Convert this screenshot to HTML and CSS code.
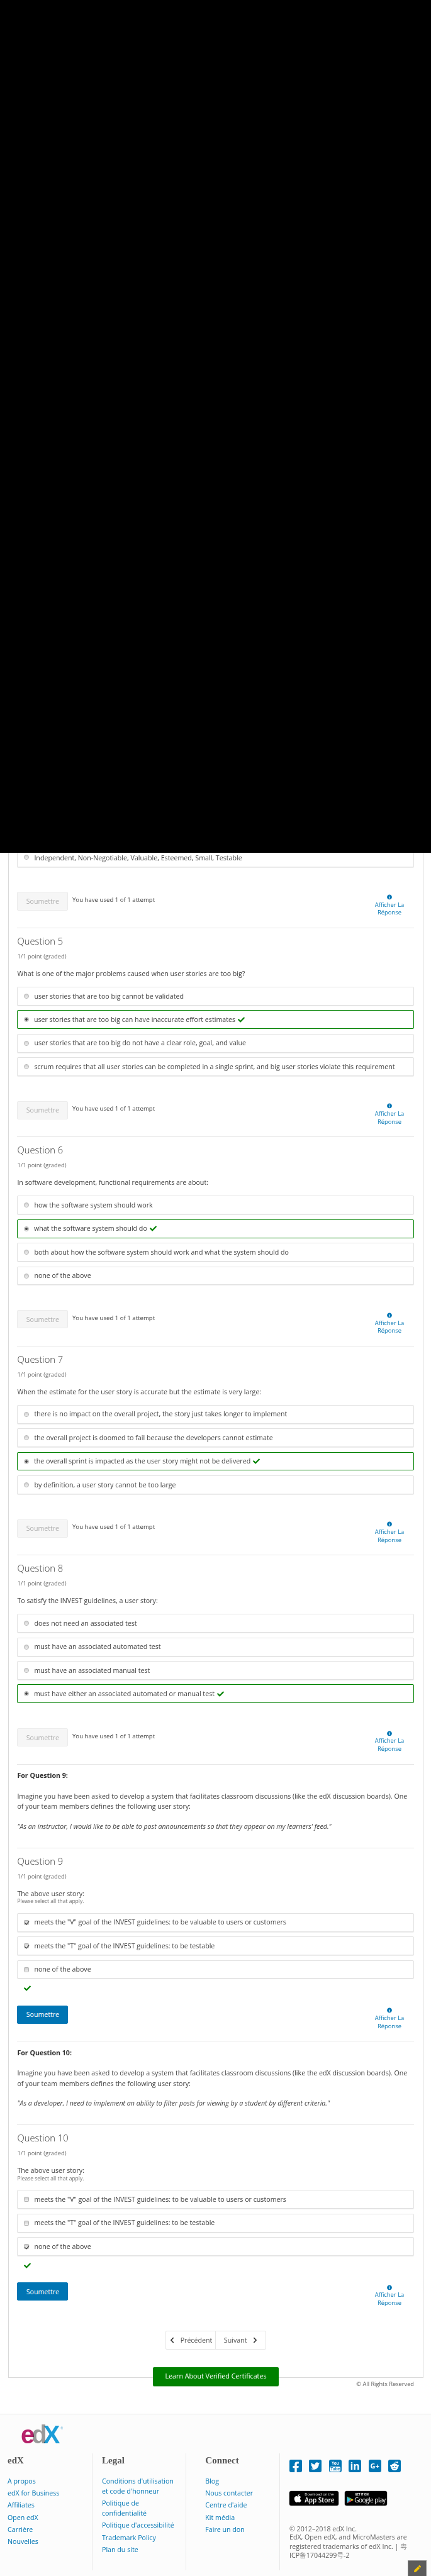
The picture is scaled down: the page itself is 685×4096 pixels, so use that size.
FILE: index.html
```html
<!DOCTYPE html>
<html lang="fr">
<head>
<meta charset="utf-8">
<title>Problem set</title>
<link rel="stylesheet" href="styles.css">
</head>
<body>
<svg class="defs" width="0" height="0" aria-hidden="true">
  <symbol id="i-check" viewBox="0 0 512 512"><path d="M173.898 439.404l-166.4-166.4c-9.997-9.997-9.997-26.206 0-36.204l36.203-36.204c9.997-9.998 26.207-9.998 36.204 0L192 312.69 432.095 72.596c9.997-9.997 26.207-9.997 36.204 0l36.203 36.204c9.997 9.997 9.997 26.206 0 36.204l-294.4 294.401c-9.998 9.997-26.207 9.997-36.204-.001z"/></symbol>
  <symbol id="i-info" viewBox="0 0 512 512"><path d="M256 8C119.043 8 8 119.083 8 256c0 136.997 111.043 248 248 248s248-111.003 248-248C504 119.083 392.957 8 256 8zm0 110c23.196 0 42 18.804 42 42s-18.804 42-42 42-42-18.804-42-42 18.804-42 42-42zm56 254c0 6.627-5.373 12-12 12h-88c-6.627 0-12-5.373-12-12v-24c0-6.627 5.373-12 12-12h12v-64h-12c-6.627 0-12-5.373-12-12v-24c0-6.627 5.373-12 12-12h64c6.627 0 12 5.373 12 12v100h12c6.627 0 12 5.373 12 12v24z"/></symbol>
</svg>

<div class="blackout"></div>

<main class="card">
  <section class="block first">
    <div class="option clip"><span class="radio"></span><span>Independent, Non-Negotiable, Valuable, Esteemed, Small, Testable</span></div>
    <div class="actions first-actions">
      <button class="submit off">Soumettre</button><span class="attempts">You have used 1 of 1 attempt</span>
      <a class="show"><svg class="info"><use href="#i-info"/></svg><span>Afficher La<br>Réponse</span></a>
    </div>
  </section>

  <section class="block">
    <h2 class="qtitle">Question 5</h2>
    <p class="points">1/1 point (graded)</p>
    <p class="prompt">What is one of the major problems caused when user stories are too big?</p>
    <div class="options">
      <div class="option"><span class="radio"></span><span>user stories that are too big cannot be validated</span></div>
      <div class="option correct"><span class="radio on"></span><span>user stories that are too big can have inaccurate effort estimates</span><svg class="check"><use href="#i-check"/></svg></div>
      <div class="option"><span class="radio"></span><span>user stories that are too big do not have a clear role, goal, and value</span></div>
      <div class="option"><span class="radio"></span><span>scrum requires that all user stories can be completed in a single sprint, and big user stories violate this requirement</span></div>
    </div>
    <div class="actions">
      <button class="submit off">Soumettre</button><span class="attempts">You have used 1 of 1 attempt</span>
      <a class="show"><svg class="info"><use href="#i-info"/></svg><span>Afficher La<br>Réponse</span></a>
    </div>
  </section>

  <section class="block">
    <h2 class="qtitle">Question 6</h2>
    <p class="points">1/1 point (graded)</p>
    <p class="prompt">In software development, functional requirements are about:</p>
    <div class="options">
      <div class="option"><span class="radio"></span><span>how the software system should work</span></div>
      <div class="option correct"><span class="radio on"></span><span>what the software system should do</span><svg class="check"><use href="#i-check"/></svg></div>
      <div class="option"><span class="radio"></span><span>both about how the software system should work and what the system should do</span></div>
      <div class="option"><span class="radio"></span><span>none of the above</span></div>
    </div>
    <div class="actions">
      <button class="submit off">Soumettre</button><span class="attempts">You have used 1 of 1 attempt</span>
      <a class="show"><svg class="info"><use href="#i-info"/></svg><span>Afficher La<br>Réponse</span></a>
    </div>
  </section>

  <section class="block">
    <h2 class="qtitle">Question 7</h2>
    <p class="points">1/1 point (graded)</p>
    <p class="prompt">When the estimate for the user story is accurate but the estimate is very large:</p>
    <div class="options">
      <div class="option"><span class="radio"></span><span>there is no impact on the overall project, the story just takes longer to implement</span></div>
      <div class="option"><span class="radio"></span><span>the overall project is doomed to fail because the developers cannot estimate</span></div>
      <div class="option correct"><span class="radio on"></span><span>the overall sprint is impacted as the user story might not be delivered</span><svg class="check"><use href="#i-check"/></svg></div>
      <div class="option"><span class="radio"></span><span>by definition, a user story cannot be too large</span></div>
    </div>
    <div class="actions">
      <button class="submit off">Soumettre</button><span class="attempts">You have used 1 of 1 attempt</span>
      <a class="show"><svg class="info"><use href="#i-info"/></svg><span>Afficher La<br>Réponse</span></a>
    </div>
  </section>

  <section class="block">
    <h2 class="qtitle">Question 8</h2>
    <p class="points">1/1 point (graded)</p>
    <p class="prompt">To satisfy the INVEST guidelines, a user story:</p>
    <div class="options">
      <div class="option"><span class="radio"></span><span>does not need an associated test</span></div>
      <div class="option"><span class="radio"></span><span>must have an associated automated test</span></div>
      <div class="option"><span class="radio"></span><span>must have an associated manual test</span></div>
      <div class="option correct"><span class="radio on"></span><span>must have either an associated automated or manual test</span><svg class="check"><use href="#i-check"/></svg></div>
    </div>
    <div class="actions">
      <button class="submit off">Soumettre</button><span class="attempts">You have used 1 of 1 attempt</span>
      <a class="show"><svg class="info"><use href="#i-info"/></svg><span>Afficher La<br>Réponse</span></a>
    </div>
  </section>

  <section class="block context">
    <p class="ctx-head">For Question 9:</p>
    <p class="ctx-body">Imagine you have been asked to develop a system that facilitates classroom discussions (like the edX discussion boards). One of your team members defines the following user story:</p>
    <p class="ctx-quote">"As an instructor, I would like to be able to post announcements so that they appear on my learners' feed."</p>
  </section>

  <section class="block">
    <h2 class="qtitle">Question 9</h2>
    <p class="points">1/1 point (graded)</p>
    <p class="prompt">The above user story:</p>
    <p class="hint">Please select all that apply.</p>
    <div class="options after-hint">
      <div class="option"><span class="box on"></span><span>meets the "V" goal of the INVEST guidelines: to be valuable to users or customers</span></div>
      <div class="option"><span class="box on"></span><span>meets the "T" goal of the INVEST guidelines: to be testable</span></div>
      <div class="option"><span class="box"></span><span>none of the above</span></div>
    </div>
    <svg class="check solo"><use href="#i-check"/></svg>
    <div class="actions after-check">
      <button class="submit">Soumettre</button>
      <a class="show"><svg class="info"><use href="#i-info"/></svg><span>Afficher La<br>Réponse</span></a>
    </div>
  </section>

  <section class="block context">
    <p class="ctx-head">For Question 10:</p>
    <p class="ctx-body">Imagine you have been asked to develop a system that facilitates classroom discussions (like the edX discussion boards). One of your team members defines the following user story:</p>
    <p class="ctx-quote">"As a developer, I need to implement an ability to filter posts for viewing by a student by different criteria."</p>
  </section>

  <section class="block last">
    <h2 class="qtitle">Question 10</h2>
    <p class="points">1/1 point (graded)</p>
    <p class="prompt">The above user story:</p>
    <p class="hint">Please select all that apply.</p>
    <div class="options after-hint">
      <div class="option"><span class="box"></span><span>meets the "V" goal of the INVEST guidelines: to be valuable to users or customers</span></div>
      <div class="option"><span class="box"></span><span>meets the "T" goal of the INVEST guidelines: to be testable</span></div>
      <div class="option"><span class="box on"></span><span>none of the above</span></div>
    </div>
    <svg class="check solo"><use href="#i-check"/></svg>
    <div class="actions after-check">
      <button class="submit">Soumettre</button>
      <a class="show"><svg class="info"><use href="#i-info"/></svg><span>Afficher La<br>Réponse</span></a>
    </div>
  </section>

  <nav class="pager">
    <a class="pager-btn prev"><svg class="chev" viewBox="0 0 320 512"><path d="M34.52 239.03L228.87 44.69c9.37-9.37 24.57-9.37 33.94 0l22.67 22.67c9.36 9.36 9.37 24.52.04 33.9L131.49 256l154.02 154.75c9.34 9.38 9.32 24.54-.04 33.9l-22.67 22.67c-9.37 9.37-24.57 9.37-33.94 0L34.52 272.97c-9.37-9.37-9.37-24.57 0-33.94z"/></svg><span>Précédent</span></a>
    <a class="pager-btn next"><span>Suivant</span><svg class="chev" viewBox="0 0 320 512"><path d="M285.476 272.971L91.132 467.314c-9.373 9.373-24.569 9.373-33.941 0l-22.667-22.667c-9.357-9.357-9.375-24.522-.04-33.901L188.505 256 34.484 101.255c-9.335-9.379-9.317-24.544.04-33.901l22.667-22.667c9.373-9.373 24.569-9.373 33.941 0L285.475 239.03c9.373 9.372 9.373 24.568.001 33.941z"/></svg></a>
  </nav>
</main>

<div class="below-card">
  <span></span>
  <a class="verified">Learn About Verified Certificates</a>
  <span class="rights">© All Rights Reserved</span>
</div>

<footer class="footer">
  <div class="logo"><span class="l-e">e</span><span class="l-d">d</span><span class="l-x">X</span><span class="l-r">®</span></div>
  <div class="columns">
    <div class="col col1">
      <h3>edX</h3>
      <ul>
        <li><a>A propos</a></li>
        <li><a>edX for Business</a></li>
        <li><a>Affiliates</a></li>
        <li><a>Open edX</a></li>
        <li><a>Carrière</a></li>
        <li><a>Nouvelles</a></li>
      </ul>
    </div>
    <div class="col col2">
      <h3>Legal</h3>
      <ul>
        <li><a>Conditions d'utilisation et code d'honneur</a></li>
        <li><a>Politique de confidentialité</a></li>
        <li><a>Politique d'accessibilité</a></li>
        <li><a>Trademark Policy</a></li>
        <li><a>Plan du site</a></li>
      </ul>
    </div>
    <div class="col col3">
      <h3>Connect</h3>
      <ul>
        <li><a>Blog</a></li>
        <li><a>Nous contacter</a></li>
        <li><a>Centre d'aide</a></li>
        <li><a>Kit média</a></li>
        <li><a>Faire un don</a></li>
      </ul>
    </div>
    <div class="col4">
      <div class="social">
        <svg class="soc" viewBox="0 32 448 448"><path d="M400 32H48A48 48 0 0 0 0 80v352a48 48 0 0 0 48 48h137.25V327.69h-63V256h63v-54.64c0-62.15 37-96.48 93.67-96.48 27.14 0 55.52 4.84 55.52 4.84v61h-31.27c-30.81 0-40.42 19.12-40.42 38.73V256h68.78l-11 71.69h-57.78V480H400a48 48 0 0 0 48-48V80a48 48 0 0 0-48-48z"/></svg>
        <svg class="soc" viewBox="0 32 448 448"><path d="M400 32H48C21.5 32 0 53.5 0 80v352c0 26.5 21.5 48 48 48h352c26.5 0 48-21.5 48-48V80c0-26.5-21.5-48-48-48zm-48.9 158.8c.2 2.8.2 5.7.2 8.5 0 86.7-66 186.6-186.6 186.6-37.2 0-71.7-10.8-100.7-29.4 5.3.6 10.4.8 15.8.8 30.7 0 58.9-10.4 81.4-28-28.8-.6-53-19.5-61.3-45.5 10.1 1.5 19.2 1.5 29.6-1.2-30-6.1-52.5-32.5-52.5-64.4v-.8c8.7 4.9 18.9 7.9 29.6 8.3a65.447 65.447 0 0 1-29.2-54.6c0-12.2 3.2-23.4 8.9-33.1 32.3 39.8 80.8 65.8 135.2 68.6-9.3-44.5 24-80.6 64-80.6 18.9 0 35.9 7.9 47.9 20.7 14.8-2.8 29-7.3 41.6-14.8-4.9 15.2-15.2 28-28.8 36.1 13.2-1.4 26-5.1 37.8-10.2-8.9 13.1-20.1 24.7-32.9 34z"/></svg>
        <span class="tile yt"><span class="yt-you">You</span><span class="yt-tube">Tube</span></span>
        <span class="tile in">in</span>
        <span class="tile gp">G+</span>
        <span class="tile rd"><svg class="rd-svg" viewBox="0 0 20 20"><circle cx="10" cy="11.5" r="5.6" fill="#fff"/><circle cx="4.6" cy="9.6" r="1.5" fill="#fff"/><circle cx="15.4" cy="9.6" r="1.5" fill="#fff"/><circle cx="14.4" cy="4.2" r="1.2" fill="#fff"/><path d="M10 7 L11 3.8 L14 4.3" fill="none" stroke="#fff" stroke-width=".8"/><circle cx="7.8" cy="10.8" r="1.1" class="rd-eye"/><circle cx="12.2" cy="10.8" r="1.1" class="rd-eye"/><path d="M7.6 13.6 Q10 15.2 12.4 13.6" fill="none" class="rd-mouth" stroke-width=".9"/></svg></span>
      </div>
      <div class="stores">
        <div class="store apple">
          <svg class="apple-logo" viewBox="0 0 384 512"><path d="M318.7 268.7c-.2-36.7 16.4-64.4 50-84.8-18.8-26.9-47.2-41.7-84.7-44.6-35.5-2.8-74.3 20.7-88.5 20.7-15 0-49.4-19.7-76.4-19.7C63.3 141.2 4 184.8 4 273.5q0 39.3 14.4 81.2c12.8 36.7 59 126.7 107.2 125.2 25.2-.6 43-17.9 75.8-17.9 31.8 0 48.3 17.9 76.4 17.9 48.6-.7 90.4-82.5 102.6-119.3-65.2-30.7-61.7-90-61.7-91.9zm-56.6-164.2c27.3-32.4 24.8-61.9 24-72.5-24.1 1.4-52 16.4-67.9 34.9-17.5 19.8-27.8 44.3-25.6 71.9 26.1 2 49.9-11.4 69.5-34.3z"/></svg>
          <div class="store-text"><span class="store-small">Download on the</span><span class="store-big">App Store</span></div>
        </div>
        <div class="store google">
          <svg class="play" viewBox="0 0 20 22"><polygon points="1,1 11,11 1,21" fill="#3ec6e8"/><polygon points="1,1 15,8 11,11" fill="#5fc66a"/><polygon points="1,21 15,14 11,11" fill="#e8455a"/><polygon points="15,8 20,11 15,14 11,11" fill="#f7c52c"/></svg>
          <div class="store-text g"><span class="store-small gs">GET IT ON</span><span class="store-big gb">Google play</span></div>
        </div>
      </div>
      <p class="copy">© 2012–2018 edX Inc.<br>EdX, Open edX, and MicroMasters are<br>registered trademarks of edX Inc. | <span class="cjk">粤</span><br>ICP<span class="cjk">备</span>17044299<span class="cjk">号</span>-2</p>
    </div>
  </div>
</footer>

<a class="edit-tab"><svg class="pencil" viewBox="0 0 512 512"><path d="M497.9 142.1l-46.1 46.1c-4.7 4.7-12.3 4.7-17 0l-111-111c-4.7-4.7-4.7-12.3 0-17l46.1-46.1c18.7-18.7 49.1-18.7 67.9 0l60.1 60.1c18.8 18.7 18.8 49.1 0 67.9zM284.2 99.8L21.6 362.4.4 483.9c-2.9 16.4 11.4 30.6 27.8 27.8l121.5-21.3 262.6-262.6c4.7-4.7 4.7-12.3 0-17l-111-111c-4.8-4.7-12.4-4.7-17.1 0z"/></svg></a>
</body>
</html>
```

FILE: styles.css
```css
* { box-sizing: border-box; }
html, body { margin: 0; padding: 0; }
body {
  position: relative;
  height: 4096px;
  overflow: hidden;
  background: #fff;
  color: #414141;
  font-family: "Open Sans", "Noto Sans", sans-serif;
  font-size: 10.67px;
  filter: blur(.3px);
}
p, h2, h3, ul { margin: 0; padding: 0; }
ul { list-style: none; }
a { color: #0075b4; text-decoration: none; }
.defs { position: absolute; }

.blackout { height: 1356px; background: #000; }

.card {
  width: 660px;
  margin-left: 13px;
  padding: 0 13.7px 44px 13.4px;
  border: 1px solid #d9d9d9;
  border-top: 0;
}

.block { border-bottom: 1px solid #e6e6e6; }
.block.last { border-bottom: 0; }

.qtitle { margin-top: 8.2px; font-size: 14.78px; line-height: 24px; font-weight: 300; color: #414141; }
.points { margin-top: 5.7px; font-size: 9.37px; line-height: 14px; color: #707070; }
.prompt { margin-top: 12px; line-height: 16.7px; }
.hint { font-size: 8.5px; line-height: 8.6px; color: #707070; }

.options { margin-top: 12.6px; display: flex; flex-direction: column; gap: 7.6px; }
.options.after-hint { margin-top: 14px; }
.option {
  display: flex;
  align-items: center;
  height: 29.8px;
  padding-left: 10px;
  background: #fff;
  border: 1px solid #e2e2e2;
  border-radius: 2px;
  box-shadow: 0 1px 0 #ececec;
  line-height: 16.7px;
  color: #414141;
}
.option.clip {
  height: 22.7px;
  align-items: flex-start;
  border-top: 0;
  border-radius: 0 0 2px 2px;
}
.option.correct { border: 1.5px solid #008100; box-shadow: none; padding-left: 9.5px; }
.radio, .box {
  flex: none;
  position: relative;
  width: 8px;
  height: 8px;
  margin-right: 8px;
  background: linear-gradient(#cfcfcf, #f2f2f2);
  border: 1px solid #b4b4b4;
}
.radio { border-radius: 50%; }
.box { border-radius: 1.5px; }
.clip .radio { margin-top: 3.4px; }
.radio.on::after {
  content: "";
  position: absolute;
  left: 1px; top: 1px;
  width: 4px; height: 4px;
  border-radius: 50%;
  background: #444;
}
.box.on::after {
  content: "";
  position: absolute;
  left: 1.5px; top: -.5px;
  width: 3px; height: 5.5px;
  border: solid #333;
  border-width: 0 1.4px 1.4px 0;
  transform: rotate(40deg);
}
.check { width: 11px; height: 11px; margin-left: 4px; fill: #008100; flex: none; }
.check.solo { display: block; margin: 9.9px 0 0 11px; }

.actions { display: flex; align-items: flex-start; margin-top: 39.7px; min-height: 56.6px; }
.actions.first-actions { margin-top: 39.6px; }
.actions.after-check { margin-top: 21.2px; }
.submit {
  flex: none;
  width: 81px;
  height: 29.3px;
  padding: 0;
  border: 1px solid #0075b4;
  border-radius: 2px;
  background: #0075b4;
  color: #fff;
  font-family: inherit;
  font-size: 10.62px;
}
.submit.off { background: #f6f6f6; border-color: #ececec; color: #b0b0b0; }
.attempts { margin: 4.6px 0 0 6.6px; line-height: 16.7px; font-size: 9.65px; }
.show {
  margin: 1.6px 9.3px 0 auto;
  width: 60px;
  text-align: center;
  font-size: 9.38px;
  line-height: 12.8px;
}
.show span { display: block; }
.info { display: block; width: 8px; height: 12.8px; margin: 0 auto; fill: #0075b4; }

.context p { line-height: 16.7px; }
.ctx-head { margin-top: 9.6px; font-weight: 700; color: #313131; }
.ctx-body { margin-top: 15.65px; }
.ctx-quote { margin-top: 14.6px; margin-bottom: 25.5px; font-style: italic; }

.pager {
  display: flex;
  width: 160px;
  height: 30px;
  margin: 20.4px auto 0;
  border: 1px solid #e6e6e6;
  border-radius: 2px;
}
.pager-btn { display: flex; align-items: center; width: 50%; color: #555; white-space: nowrap; }
.pager-btn.prev { padding-left: 6.4px; gap: 9.4px; border-right: 1px solid #e6e6e6; }
.pager-btn.next { padding-left: 13px; gap: 9px; }
.chev { width: 7px; height: 10px; fill: #313131; flex: none; }

.below-card {
  display: grid;
  grid-template-columns: 1fr auto 1fr;
  margin-top: -16.8px;
  padding: 0 27px 0 28px;
  position: relative;
}
.verified {
  display: block;
  width: 200.5px;
  height: 29.3px;
  background: #008100;
  border-radius: 2px;
  color: #fff;
  text-align: center;
  line-height: 29.3px;
  font-size: 10.69px;
  box-shadow: 0 1px 0 #9ccf9c;
}
.rights { justify-self: end; margin-top: 19.7px; line-height: 14px; font-size: 9.26px; color: #5e5e5e; }

.footer {
  margin-top: 40.5px;
  height: 262px;
  border-top: 1px solid #e6e6e6;
  background: #fcfcfc;
}
.logo {
  display: flex;
  align-items: baseline;
  height: 29px;
  margin: 17.2px 0 15px 33px;
  font-family: "Liberation Sans", sans-serif;
  font-weight: 700;
  font-size: 40px;
  line-height: 29px;
}
.logo span { mix-blend-mode: multiply; }
.l-e { color: #b8226b; }
.l-d { color: #9b9b9b; margin-left: -5px; }
.l-x { color: #1b9fdb; margin-left: -6px; }
.l-r { color: #6fb7dd; font-size: 5px; align-self: flex-start; line-height: 8px; margin-left: 1px; }

.columns { display: grid; grid-template-columns: 146.5px 149.5px 149px 1fr; height: 186px; }
.col { border-right: 1px solid #e8e8e8; }
.col1 { padding-left: 12px; }
.col2 { padding-left: 15.5px; padding-right: 15px; }
.col3 { padding-left: 30.3px; }
.col4 { padding-left: 15px; padding-top: 10.7px; }
.col h3 {
  margin-top: 2px;
  font-family: "Liberation Serif", serif;
  font-size: 15px;
  line-height: 18px;
  color: #555;
}
.col ul { margin-top: 16px; }
.col li { font-size: 10.67px; line-height: 16px; margin-bottom: 3.3px; }

.social { display: flex; gap: 11.4px; }
.soc { width: 20px; height: 20px; fill: #0075b4; }
.tile {
  flex: none;
  width: 20px;
  height: 20px;
  border-radius: 3px;
  background: #0075b4;
  color: #fff;
  display: flex;
  align-items: center;
  justify-content: center;
  font-weight: 700;
  overflow: hidden;
}
.yt { flex-direction: column; font-family: "Liberation Sans", sans-serif; font-size: 6.5px; line-height: 8px; }
.yt-tube { background: #fff; color: #0075b4; border-radius: 2px; padding: 0 1px; line-height: 8px; margin-top: 1px; }
.in { font-size: 16px; line-height: 20px; }
.gp { font-size: 11px; line-height: 20px; }
.rd-svg { width: 20px; height: 20px; }
.rd-eye { fill: #0075b4; }
.rd-mouth { stroke: #0075b4; }

.stores { display: flex; gap: 10px; margin-top: 29.3px; }
.store {
  display: flex;
  align-items: center;
  flex: none;
  height: 23px;
  background: #000;
  border-radius: 3px;
  box-shadow: 0 0 0 .5px #999;
  color: #fff;
  white-space: nowrap;
}
.store.apple { width: 78.3px; padding-left: 6.7px; gap: 5px; }
.store.google { width: 66.7px; padding-left: 2.5px; gap: 1.5px; }
.apple-logo { width: 12.5px; height: 15px; fill: #fff; flex: none; }
.play { width: 11px; height: 12px; flex: none; margin-top: 5px; }
.store-text { display: flex; flex-direction: column; font-family: "Open Sans", sans-serif; }
.store-small { font-size: 5.8px; line-height: 7px; }
.store-big { font-size: 10px; line-height: 11px; font-weight: 600; }
.store-small.gs { font-size: 4.4px; font-weight: 700; line-height: 6px; margin-left: 1px; }
.store-big.gb { font-size: 10px; line-height: 12px; font-weight: 400; letter-spacing: -.5px; }

.copy { margin-top: 31.3px; width: 200px; font-size: 10.65px; line-height: 13.33px; color: #5e5e5e; white-space: nowrap; }
.cjk { font-family: "Noto Sans CJK SC", sans-serif; color: #8a8a8a; }

.edit-tab {
  position: absolute;
  left: 648px;
  top: 4071px;
  width: 30px;
  height: 25px;
  background: #5c5c5c;
  border: 1px solid #8c8c8c;
  border-bottom: 0;
  display: flex;
  align-items: center;
  justify-content: center;
}
.pencil { width: 11px; height: 11px; fill: #f2c200; }
```
